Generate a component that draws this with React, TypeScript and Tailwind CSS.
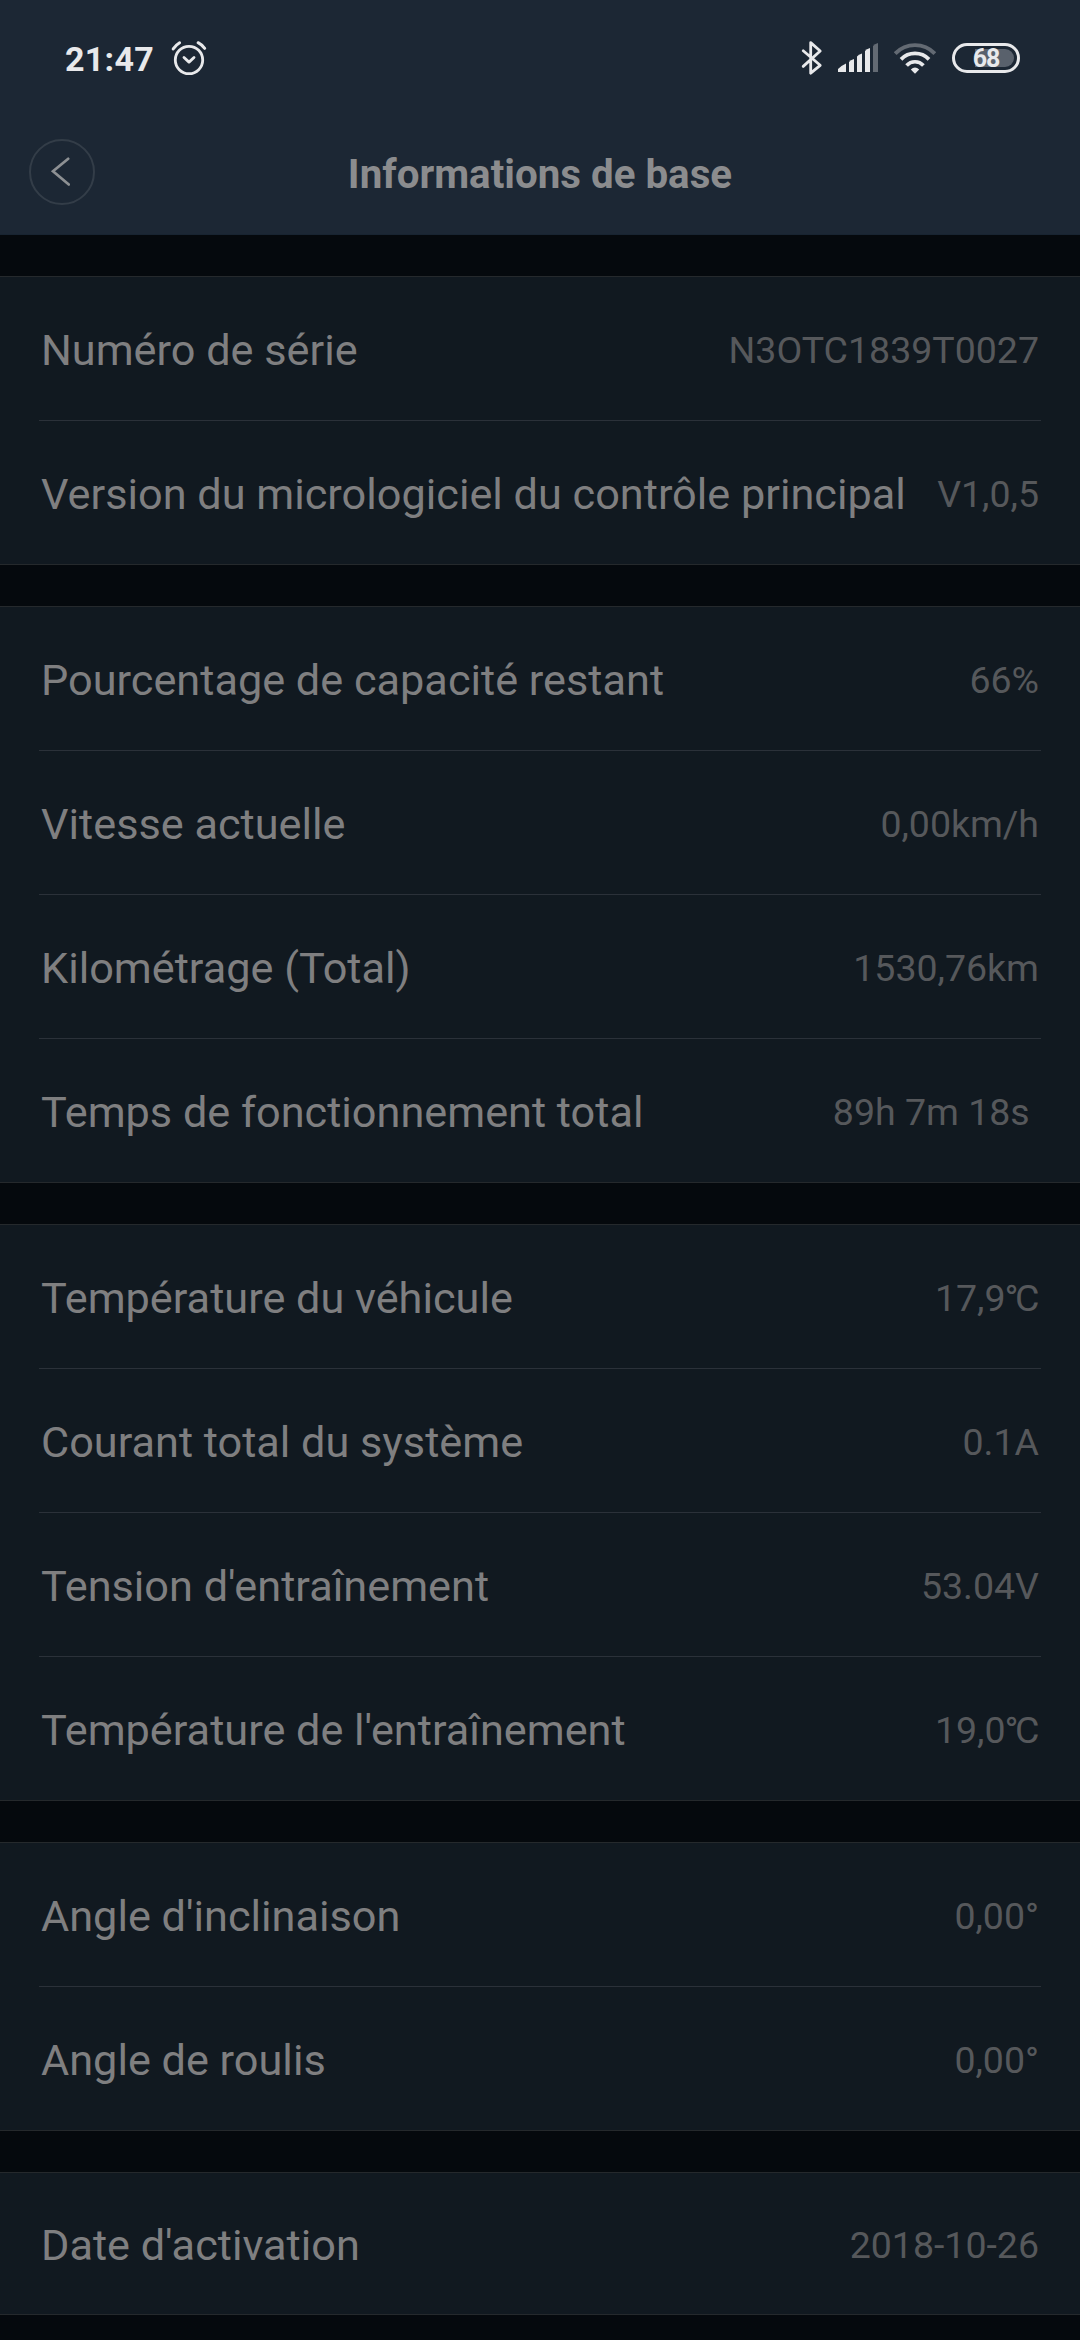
type Row = { label: string; value: string; unit?: string };

const sections: Row[][] = [
  [
    { label: "Numéro de série", value: "N3OTC1839T0027" },
    { label: "Version du micrologiciel du contrôle principal", value: "V1,0,5" },
  ],
  [
    { label: "Pourcentage de capacité restant", value: "66%" },
    { label: "Vitesse actuelle", value: "0,00km/h" },
    { label: "Kilométrage (Total)", value: "1530,76km" },
    { label: "Temps de fonctionnement total", value: "89h 7m 18s " },
  ],
  [
    { label: "Température du véhicule", value: "17,9", unit: "°C" },
    { label: "Courant total du système", value: "0.1A" },
    { label: "Tension d'entraînement", value: "53.04V" },
    { label: "Température de l'entraînement", value: "19,0", unit: "°C" },
  ],
  [
    { label: "Angle d'inclinaison", value: "0,00°" },
    { label: "Angle de roulis", value: "0,00°" },
  ],
  [{ label: "Date d'activation", value: "2018-10-26" }],
];

function AlarmIcon() {
  return (
    <svg className="h-[36px] w-[38px]" viewBox="170 40 38 36" fill="none" stroke="#e8e9eb" strokeLinecap="round">
      <circle cx="189" cy="60" r="13.7" strokeWidth="2.8" />
      <path d="M184 57.500l5 4.600 5-4.600" strokeWidth="2.8" strokeLinejoin="round" />
      <path d="M173.200 48.900q2.800-4 6.400-6.100M204.700 48.300q-2.800-3.600-6.600-5.600" strokeWidth="3" />
    </svg>
  );
}

function BluetoothIcon() {
  return (
    <svg className="h-[36px] w-[24px]" viewBox="800 40 24 36" fill="none" stroke="#e8e9eb" strokeWidth="2.8" strokeLinecap="round" strokeLinejoin="round">
      <path d="M803.200 50.800L820.200 65.300 810.700 73.200V42.600L820.200 51 803.200 66.400" />
    </svg>
  );
}

function SignalIcon() {
  return (
    <svg className="ml-[14px] h-[30px] w-[40px]" viewBox="838 43 40 30" fill="#e8e9eb">
      <path d="M838 72v-3q3.500-3.500 8-5.500V72z" />
      <path d="M849 72V62q1.500-2 5-3v13z" />
      <path d="M857 72V56.500q1.500-2 5-3V72z" />
      <path d="M865 72V51q1.500-2 5-3v24z" />
      <path d="M873 72V46q1.500-2 5-3v29z" fill="#636a73" />
    </svg>
  );
}

function WifiIcon() {
  return (
    <svg className="ml-[16px] h-[32px] w-[42px]" viewBox="894 42 42 32" fill="none" stroke="#e8e9eb" strokeWidth="3.7">
      <path d="M895.200 53.600A27.500 27.500 0 0 1 934.800 53.600" stroke="#636a73" strokeWidth="3.800" />
      <path d="M901 59.400A19.500 19.500 0 0 1 929 59.400" />
      <path d="M906.600 65.400A11.500 11.500 0 0 1 923.400 65.400" />
      <path d="M915 73.700l-4.200-4.200q4.200-3.800 8.400 0z" fill="#e8e9eb" stroke="none" />
    </svg>
  );
}

function BatteryIcon() {
  return (
    <div className="ml-[16px] flex h-[30px] w-[68px] rounded-full border-3 border-[#e8e9eb] p-[3px]">
      <div className="flex flex-1 items-center justify-center rounded-full bg-linear-to-r from-transparent from-31% to-[#59616c] to-31%">
        <span className="mt-[1px] text-[25px] leading-none font-bold tracking-[-1.2px] text-[#e8e9eb]">68</span>
      </div>
    </div>
  );
}

function StatusBar() {
  return (
    <div className="flex h-[116px] items-center justify-between pr-[60px] pl-[65px]">
      <div className="flex items-center">
        <span className="w-[105px] pt-[2px] text-[34px] leading-none font-bold tracking-[0.3px] text-[#e8e9eb]">21:47</span>
        <AlarmIcon />
      </div>
      <div className="flex items-center">
        <BluetoothIcon />
        <SignalIcon />
        <WifiIcon />
        <BatteryIcon />
      </div>
    </div>
  );
}

function TitleBar() {
  return (
    <div className="grid h-[118px] grid-cols-[1fr_auto_1fr] items-center px-[29px]">
      <button aria-label="Retour" className="mt-[-6px] flex size-[66px] items-center justify-center rounded-full border-2 border-[#333d48]">
        <svg className="mr-[4px] h-[30px] w-[20px]" viewBox="0 0 20 30" fill="none" stroke="#8d9093" strokeWidth="2.700" strokeLinecap="round">
          <path d="M18.200 1.800L3 14.300 18.800 27.500" />
        </svg>
      </button>
      <h1 className="text-[40.3px] leading-none font-bold text-[#8b8c8e]">Informations de base</h1>
    </div>
  );
}

export default function App() {
  return (
    <div className="h-[2340px] w-[1080px] overflow-hidden bg-[#05090d] font-[Roboto,sans-serif]">
      <header className="h-[235px] border-b border-[#182431] bg-[#1c2734]">
        <StatusBar />
        <TitleBar />
      </header>
      <main className="flex flex-col gap-[41px] pt-[41px]">
        {sections.map((rows, i) => (
          <section key={i} className="border-y border-[#25292c] bg-[#111920] px-[39px]">
            {rows.map((row) => (
              <div
                key={row.label}
                className="flex h-[144px] items-center justify-between border-b border-[#2b3139] px-[2px] pt-[4px] last:h-[143px] last:border-b-0 only:h-[141px]"
              >
                <span className="text-[43.25px] leading-none text-[#7f7f80]">{row.label}</span>
                <span className="text-[37.5px] leading-none whitespace-pre text-[#56585b]">
                  {row.value}
                  {row.unit && <span className="mr-[3px] -ml-[1px] tracking-[-3.500px]">{row.unit}</span>}
                </span>
              </div>
            ))}
          </section>
        ))}
      </main>
    </div>
  );
}
